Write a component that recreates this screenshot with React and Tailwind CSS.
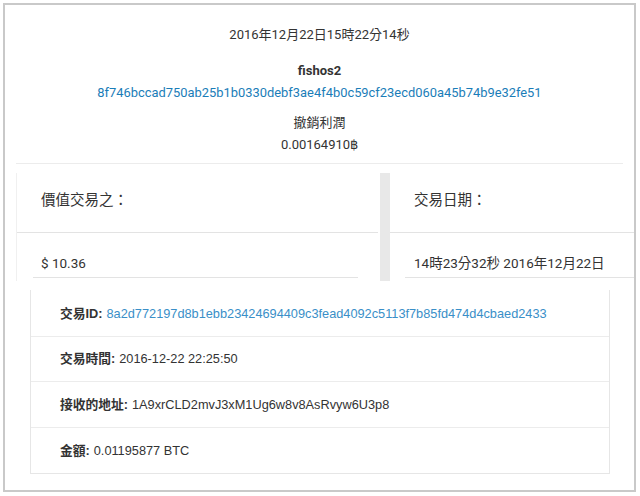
const TX_ROWS = [
  { label: '交易ID:', value: '8a2d772197d8b1ebb23424694409c3fead4092c5113f7b85fd474d4cbaed2433', link: true },
  { label: '交易時間:', value: '2016-12-22 22:25:50' },
  { label: '接收的地址:', value: '1A9xrCLD2mvJ3xM1Ug6w8v8AsRvyw6U3p8' },
  { label: '金額:', value: '0.01195877 BTC' },
]

const roboto = { fontFamily: 'Roboto, "Noto Sans CJK TC", sans-serif' }
const helv = { fontFamily: '"Liberation Sans", Arial, "Noto Sans CJK TC", sans-serif' }

function Panel({ title, value, className, lineClass }) {
  return (
    <div className={className}>
      <div className="flex h-[60px] items-center border-b border-[#e3e3e3] pb-[4px] pl-6 text-[14.5px] text-[#333]">{title}</div>
      <div className="h-[44px] pl-6 pt-[20px] text-[13.5px] leading-[20px] text-[#333]">{value}</div>
      <div className={lineClass} />
    </div>
  )
}

export default function App() {
  return (
    <div className="h-[496px] w-[640px] bg-white p-[3px]" style={roboto}>
      <div className="h-[489px] w-[633px] border-2 border-[#c9c9c9] bg-white">
        {/* header block */}
        <div className="mx-[11px] flex flex-col items-center border-b border-[#ececec] pb-[8px] pt-[20px] text-[13px] text-[#333]">
          <div className="leading-[20px]">2016年12月22日15時22分14秒</div>
          <div className="mt-[16px] font-bold leading-[20px]">fishos2</div>
          <div className="mt-[2px] text-[12.9px] leading-[20px] text-[#1a7db8]">8f746bccad750ab25b1b0330debf3ae4f4b0c59cf23ecd060a45b74b9e32fe51</div>
          <div className="mt-[10px] leading-[20px]">撤銷利潤</div>
          <div className="mt-[2px] leading-[20px]">0.00164910฿</div>
        </div>

        {/* value / date panels */}
        <div className="ml-[11px] mt-[9px] flex h-[108px]">
          <Panel
            title="價值交易之："
            value="$ 10.36"
            className="w-[362px] border-l border-[#f0f0f0]"
            lineClass="ml-[16px] w-[325px] border-b border-[#e3e3e3]"
          />
          <div className="ml-[2px] w-[10px] bg-[#e8e8e8]" />
          <Panel
            title="交易日期："
            value="14時23分32秒 2016年12月22日"
            className="flex-1"
            lineClass="ml-[15px] border-b border-[#e3e3e3]"
          />
        </div>

        {/* transaction card */}
        <div className="ml-[25px] mr-[24px] mt-[9px] border border-t-0 border-[#e6e6e6] pt-[1px]" style={helv}>
          {TX_ROWS.map((r, i) => (
            <div
              key={r.label}
              className={`flex h-[45.5px] items-center pl-[29px] text-[12.75px] text-[#333] ${i < TX_ROWS.length - 1 ? 'border-b border-[#ececec]' : ''}`}
            >
              <span className="font-bold">{r.label}</span>
              <span className={`ml-[4px] ${r.link ? 'text-[#3a8fc8]' : ''}`}>{r.value}</span>
            </div>
          ))}
        </div>
      </div>
    </div>
  )
}
